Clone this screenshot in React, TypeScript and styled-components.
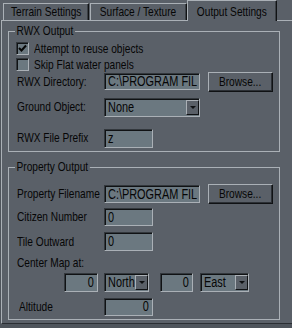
import React from 'react';
import styled, { createGlobalStyle } from 'styled-components';

const BG = '#5a6068';
const FIELD = '#6b7880';
const LIGHT = '#aab0b6';
const DARK = '#101214';

const GlobalStyle = createGlobalStyle`
  html, body {
    margin: 0;
    padding: 0;
    background: ${BG};
  }
  body {
    font-family: "Liberation Sans Narrow", "Arial Narrow", "Liberation Sans", sans-serif;
    font-size: 13px;
    color: #060606;
  }
`;

// no narrow face installed: squeeze the Arial metrics to Arial Narrow width
const Narrow = styled.span<{ $origin?: string }>`
  display: inline-block;
  transform: scaleX(0.78);
  transform-origin: ${(p) => p.$origin ?? 'left'} center;
  white-space: nowrap;
`;

const Window = styled.div`
  width: 292px;
  height: 328px;
  overflow: hidden;
  background: #4e545b;
  display: flex;
  flex-direction: column;
`;

const TabBar = styled.div`
  display: flex;
  align-items: flex-end;
  height: 20px;
  padding-left: 3px;
  position: relative;
  z-index: 1;
  background: ${BG};
`;

const Tab = styled.div<{ $w: number; $active?: boolean; $first?: boolean }>`
  box-sizing: border-box;
  width: ${(p) => p.$w}px;
  height: ${(p) => (p.$active ? 21 : 17)}px;
  margin-bottom: ${(p) => (p.$active ? -1 : 0)}px;
  margin-left: ${(p) => (p.$active || p.$first ? 0 : 1)}px;
  padding-top: ${(p) => (p.$active ? 4 : 1)}px;
  display: flex;
  justify-content: center;
  align-items: flex-start;
  border-top: 1px solid ${LIGHT};
  border-left: 1px solid ${LIGHT};
  border-right: 1px solid ${DARK};
  box-shadow: inset -1px 0 #3a3f45;
  background: ${BG};
  line-height: 14px;
`;

const Panel = styled.div`
  height: 304px;
  box-sizing: border-box;
  margin-left: 1px;
  background: ${BG};
  border-top: 1px solid ${LIGHT};
  border-left: 1px solid ${LIGHT};
  border-bottom: 1px solid #2a2e33;
  padding: 10px 0 0 6px;
`;

const GroupBox = styled.div<{ $mt?: number }>`
  position: relative;
  box-sizing: border-box;
  width: 272px;
  margin-top: ${(p) => p.$mt ?? 0}px;
  padding-bottom: 3px;
  border: 1px solid ${LIGHT};
`;

const Legend = styled.span`
  position: absolute;
  top: -8px;
  left: 6px;
  padding: 0 2px;
  background: ${BG};
  line-height: 14px;
  white-space: nowrap;
  transform: scaleX(0.78);
  transform-origin: left center;
`;

const Row = styled.div<{ $mt: number; $h?: number }>`
  display: flex;
  align-items: center;
  height: ${(p) => p.$h ?? 19}px;
  margin-top: ${(p) => p.$mt}px;
  padding-left: 8px;
`;

const Label = styled.span<{ $w?: number; $indent?: number }>`
  box-sizing: border-box;
  width: ${(p) => p.$w ?? 87}px;
  padding-left: ${(p) => p.$indent ?? 0}px;
  flex-shrink: 0;
  line-height: 14px;
`;

const CheckBox = styled.span`
  box-sizing: border-box;
  width: 13px;
  height: 13px;
  margin-left: -1px;
  display: flex;
  align-items: center;
  justify-content: center;
  background: ${FIELD};
  border: 1px solid;
  border-color: #33383d ${LIGHT} ${LIGHT} #33383d;
  box-shadow: inset 1px 1px ${DARK};
`;

const CheckLabel = styled.span`
  margin-left: 5px;
  line-height: 14px;
`;

const Field = styled.div<{ $w: number; $h?: number; $ml?: number; $right?: boolean }>`
  box-sizing: border-box;
  width: ${(p) => p.$w}px;
  height: ${(p) => p.$h ?? 18}px;
  margin-left: ${(p) => p.$ml ?? 0}px;
  padding: 0 ${(p) => (p.$right ? 3 : 0)}px 0 3px;
  overflow: hidden;
  background: ${FIELD};
  border: 1px solid;
  border-color: #33383d ${LIGHT} ${LIGHT} #33383d;
  box-shadow: inset 1px 1px ${DARK};
  display: flex;
  align-items: center;
  justify-content: ${(p) => (p.$right ? 'flex-end' : 'flex-start')};
  font-size: 14px;
  line-height: 15px;
`;

const Select = styled.div<{ $w: number; $ml?: number }>`
  box-sizing: border-box;
  width: ${(p) => p.$w}px;
  height: 19px;
  margin-left: ${(p) => p.$ml ?? 0}px;
  display: flex;
  background: ${FIELD};
  border: 1px solid;
  border-color: #33383d ${LIGHT} ${LIGHT} #33383d;
  box-shadow: inset 1px 1px ${DARK};
  padding: 1px 0 1px 1px;
`;

const SelectText = styled.span`
  flex: 1;
  min-width: 0;
  padding-left: 2px;
  display: flex;
  align-items: center;
  font-size: 14px;
  line-height: 15px;
  overflow: hidden;
`;

const DropButton = styled.span`
  box-sizing: border-box;
  width: 13px;
  height: 100%;
  flex-shrink: 0;
  display: flex;
  align-items: center;
  justify-content: center;
  background: ${BG};
  border: 1px solid;
  border-color: ${LIGHT} ${DARK} ${DARK} ${LIGHT};

  &::after {
    content: '';
    border-left: 3px solid transparent;
    border-right: 3px solid transparent;
    border-top: 3px solid ${DARK};
  }
`;

const Button = styled.div`
  box-sizing: border-box;
  width: 65px;
  height: 20px;
  margin-left: 8px;
  display: flex;
  align-items: center;
  justify-content: center;
  background: ${BG};
  border: 1px solid;
  border-color: ${LIGHT} ${DARK} ${DARK} ${LIGHT};
  box-shadow: inset -1px -1px #2c3035;
  line-height: 14px;
`;

const Check = () => (
  <svg width="9" height="9" viewBox="0 0 9 9">
    <path d="M1 4 L3.5 6.5 L8 1.5" stroke="#060606" strokeWidth="2" fill="none" />
  </svg>
);

const N = ({ children, o }: { children: React.ReactNode; o?: string }) => (
  <Narrow $origin={o}>{children}</Narrow>
);

const App = () => (
  <>
    <GlobalStyle />
    <Window>
      <TabBar>
        <Tab $w={86} $first><N o="center">Terrain Settings</N></Tab>
        <Tab $w={97}><N o="center">Surface / Texture</N></Tab>
        <Tab $w={90} $active><N o="center">Output Settings</N></Tab>
      </TabBar>
      <Panel>
        <GroupBox>
          <Legend>RWX Output</Legend>
          <Row $mt={10} $h={13}>
            <CheckBox><Check /></CheckBox>
            <CheckLabel><N>Attempt to reuse objects</N></CheckLabel>
          </Row>
          <Row $mt={3} $h={13}>
            <CheckBox />
            <CheckLabel><N>Skip Flat water panels</N></CheckLabel>
          </Row>
          <Row $mt={1} $h={19}>
            <Label><N>RWX Directory:</N></Label>
            <Field $w={96} $h={17}><N>C:\PROGRAM FIL</N></Field>
            <Button><N o="center">Browse...</N></Button>
          </Row>
          <Row $mt={6} $h={20}>
            <Label><N>Ground Object:</N></Label>
            <Select $w={96}>
              <SelectText><N>None</N></SelectText>
              <DropButton />
            </Select>
          </Row>
          <Row $mt={11} $h={20}>
            <Label><N>RWX File Prefix</N></Label>
            <Field $w={49} $h={19}><N>z</N></Field>
          </Row>
        </GroupBox>

        <GroupBox $mt={15}>
          <Legend>Property Output</Legend>
          <Row $mt={16} $h={20}>
            <Label><N>Property Filename</N></Label>
            <Field $w={96}><N>C:\PROGRAM FIL</N></Field>
            <Button><N o="center">Browse...</N></Button>
          </Row>
          <Row $mt={4} $h={18}>
            <Label><N>Citizen Number</N></Label>
            <Field $w={49}><N>0</N></Field>
          </Row>
          <Row $mt={6} $h={19}>
            <Label><N>Tile Outward</N></Label>
            <Field $w={49} $h={19}><N>0</N></Field>
          </Row>
          <Row $mt={5} $h={14}>
            <Label><N>Center Map at:</N></Label>
          </Row>
          <Row $mt={3} $h={19}>
            <Field $w={34} $h={19} $ml={47} $right><N o="right">0</N></Field>
            <Select $w={45} $ml={6}>
              <SelectText><N>North</N></SelectText>
              <DropButton />
            </Select>
            <Field $w={33} $h={19} $ml={11} $right><N o="right">0</N></Field>
            <Select $w={49} $ml={7}>
              <SelectText><N>East</N></SelectText>
              <DropButton />
            </Select>
          </Row>
          <Row $mt={5} $h={19}>
            <Label $indent={2}><N>Altitude</N></Label>
            <Field $w={49} $right><N o="right">0</N></Field>
          </Row>
        </GroupBox>
      </Panel>
    </Window>
  </>
);

export default App;
